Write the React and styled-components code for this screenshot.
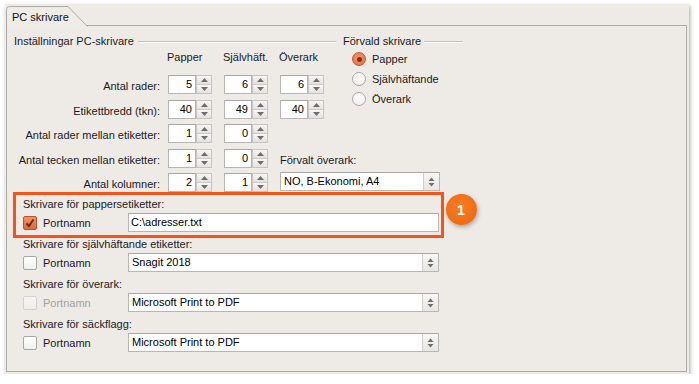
import React from 'react';
import styled, { createGlobalStyle } from 'styled-components';

const Global = createGlobalStyle`
  html, body { margin: 0; padding: 0; background: #ffffff; }
  body {
    font-family: "Liberation Sans", Arial, sans-serif;
    font-size: 11px;
    color: #1a1a1a;
  }
  * { box-sizing: border-box; }
`;

const Window = styled.div`
  margin: 4px 0 0 5px;
  width: 684px;
  height: 370px;
  background: #eeebe7;
  box-shadow: 1px 2px 4px rgba(0, 0, 0, 0.35);
  display: flex;
  flex-direction: column;
`;

const TabBar = styled.div`
  height: 21px;
  padding-left: 1px;
  display: flex;
  align-items: flex-end;
`;

const Tab = styled.div`
  position: relative;
  z-index: 1;
  width: 82px;
  height: 20px;
  margin-bottom: -1px;
  padding-left: 6px;
  display: flex;
  align-items: center;
  padding-top: 1px;
  color: #111;
`;

const TabShape = styled.svg`
  position: absolute;
  left: 0;
  top: 0;
  z-index: -1;
`;

const Panel = styled.div`
  flex: 1;
  margin: 0 2px 2px 1px;
  border: 1px solid #aeaba6;
  padding: 8px 0 0 7px;
  display: flex;
  flex-direction: column;
`;

const TopGrid = styled.div`
  display: grid;
  grid-template-columns: 154px 56px 56px 63px 120px;
  grid-template-rows: 16px 25px repeat(5, 24.5px);
`;

const GroupTitle = styled.div`
  grid-column: ${(p) => p.$col};
  grid-row: 1;
  height: 14px;
  display: flex;
  align-items: center;
  gap: ${(p) => p.$gap || 4}px;
  padding-right: ${(p) => p.$pr || 0}px;
  white-space: nowrap;
  color: #1a1a1a;
`;

const EtchLine = styled.span`
  flex: 1;
  height: 2px;
  border-top: 1px solid #c5c2bd;
  border-bottom: 1px solid #fbfaf9;
  margin-top: 1px;
`;

const ColHeader = styled.div`
  grid-column: ${(p) => p.$col};
  grid-row: 2;
  line-height: 14px;
  margin-left: -1px;
  align-self: start;
`;

const RowLabel = styled.div`
  grid-column: 1;
  grid-row: ${(p) => p.$row};
  text-align: right;
  padding-right: 8px;
  padding-top: 4px;
  line-height: 14px;
  white-space: nowrap;
`;

const SpinCell = styled.div`
  grid-column: ${(p) => p.$col};
  grid-row: ${(p) => p.$row};
  display: flex;
  width: 44px;
  height: 19px;
  align-self: start;
`;

const SpinInput = styled.div`
  width: 28px;
  height: 19px;
  background: #ffffff;
  border: 1px solid #b9b6b1;
  border-top-color: #aaa7a2;
  text-align: right;
  padding-right: 3px;
  line-height: 17px;
  color: #000;
`;

const SpinButtons = styled.div`
  width: 16px;
  height: 19px;
  border: 1px solid #c7c4bf;
  display: flex;
  flex-direction: column;
`;

const SpinHalf = styled.div`
  flex: 1;
  display: flex;
  align-items: center;
  justify-content: center;
  background: linear-gradient(#f7f6f5, #e4e2df);
  & + & { border-top: 1px solid #cfccc7; }
`;

const RadioList = styled.div`
  grid-column: 5;
  grid-row: 2 / 5;
  margin-top: -1px;
  display: flex;
  flex-direction: column;
`;

const RadioItem = styled.div`
  height: 20px;
  display: flex;
  align-items: center;
  gap: 6px;
  padding-left: 9px;
`;

const RadioCircle = styled.span`
  width: 14px;
  height: 14px;
  border-radius: 50%;
  display: flex;
  align-items: center;
  justify-content: center;
  border: 1px solid ${(p) => (p.$on ? '#c9582a' : '#a9a7a4')};
  background: ${(p) =>
    p.$on
      ? 'radial-gradient(circle at 50% 40%, #f59a6c, #e8683a)'
      : 'linear-gradient(#ffffff, #f1f0ee)'};
`;

const RadioDot = styled.span`
  width: 5px;
  height: 5px;
  border-radius: 50%;
  background: #7e3414;
`;

const OverarkLabel = styled.div`
  grid-column: 4 / 6;
  grid-row: 6;
  align-self: end;
  line-height: 14px;
  margin-bottom: 6px;
  white-space: nowrap;
`;

const SelectBox = styled.div`
  grid-column: ${(p) => p.$col || 'auto'};
  grid-row: ${(p) => p.$row || 'auto'};
  width: ${(p) => p.$w}px;
  height: 19px;
  margin-top: ${(p) => p.$mt || 0}px;
  align-self: start;
  display: flex;
  background: #ffffff;
  border: 1px solid #b9b6b1;
  border-top-color: #aaa7a2;
`;

const SelectText = styled.div`
  flex: 1;
  padding-left: 3px;
  line-height: 17px;
  color: #000;
  white-space: nowrap;
  overflow: hidden;
`;

const SelectButton = styled.div`
  width: 16px;
  display: flex;
  align-items: center;
  justify-content: center;
  border-left: 1px solid #d2cfca;
  background: linear-gradient(#f8f7f6, #e8e6e3);
`;

const TextField = styled.div`
  width: ${(p) => p.$w}px;
  height: 19px;
  background: #ffffff;
  border: 1px solid #b9b6b1;
  border-top-color: #aaa7a2;
  padding-left: 2px;
  line-height: 17px;
  color: #000;
`;

const Lower = styled.div`
  margin: -2px 0 0 9px;
  display: flex;
  flex-direction: column;
  gap: 3.5px;
`;

const Section = styled.div`
  position: relative;
  display: flex;
  flex-direction: column;
`;

const SectionLabel = styled.div`
  height: 16px;
  line-height: 16px;
  white-space: nowrap;
`;

const PortRow = styled.div`
  margin-top: 1.5px;
  height: 19px;
  display: flex;
  align-items: center;
`;

const CheckBox = styled.span`
  width: 14px;
  height: 14px;
  border-radius: 2px;
  display: flex;
  align-items: center;
  justify-content: center;
  border: 1px solid
    ${(p) => (p.$on ? '#b9532a' : p.$disabled ? '#d3d1ce' : '#a9a7a4')};
  background: ${(p) =>
    p.$on
      ? 'linear-gradient(#ef9366, #de6a3c)'
      : p.$disabled
      ? 'linear-gradient(#f6f5f3, #efedea)'
      : 'linear-gradient(#ffffff, #f1f0ee)'};
`;

const PortLabel = styled.span`
  width: 85px;
  margin-left: 6px;
  color: ${(p) => (p.$disabled ? '#a3a19e' : '#1a1a1a')};
`;

const Highlight = styled.div`
  position: absolute;
  left: -10px;
  top: -3.5px;
  width: 431px;
  height: 46px;
  border: 3px solid #f4531a;
  pointer-events: none;
`;

const Badge = styled.div`
  position: absolute;
  left: 422.5px;
  top: -1.5px;
  width: 31px;
  height: 31px;
  border-radius: 50%;
  background: radial-gradient(circle at 45% 40%, #f77d22, #ec650c);
  box-shadow: 1px 2px 4px rgba(0, 0, 0, 0.3);
  color: #ffffff;
  font-weight: bold;
  font-size: 14px;
  display: flex;
  align-items: center;
  justify-content: center;
`;

const UpArrow = () => (
  <svg width="7" height="4" viewBox="0 0 7 4">
    <path d="M0 4 L3.5 0 L7 4 Z" fill="#6f6d6a" />
  </svg>
);

const DownArrow = () => (
  <svg width="7" height="4" viewBox="0 0 7 4">
    <path d="M0 0 L7 0 L3.5 4 Z" fill="#6f6d6a" />
  </svg>
);

const UpDown = () => (
  <svg width="7" height="10" viewBox="0 0 7 10">
    <path d="M0.5 4 L3.5 0.5 L6.5 4 Z" fill="#6f6d6a" />
    <path d="M0.5 6 L6.5 6 L3.5 9.5 Z" fill="#6f6d6a" />
  </svg>
);

const Check = () => (
  <svg width="12" height="12" viewBox="0 0 12 12">
    <path d="M2.5 6.5 L5 9 L9.5 2.5" fill="none" stroke="#6b2a10" strokeWidth="2" />
  </svg>
);

const Spinner = ({ col, row, value }) => (
  <SpinCell $col={col} $row={row}>
    <SpinInput>{value}</SpinInput>
    <SpinButtons>
      <SpinHalf><UpArrow /></SpinHalf>
      <SpinHalf><DownArrow /></SpinHalf>
    </SpinButtons>
  </SpinCell>
);

const Select = ({ col, row, w, mt, children }) => (
  <SelectBox $col={col} $row={row} $w={w} $mt={mt}>
    <SelectText>{children}</SelectText>
    <SelectButton><UpDown /></SelectButton>
  </SelectBox>
);

const rows = [
  { label: 'Antal rader:', values: ['5', '6', '6'] },
  { label: 'Etikettbredd (tkn):', values: ['40', '49', '40'] },
  { label: 'Antal rader mellan etiketter:', values: ['1', '0'] },
  { label: 'Antal tecken mellan etiketter:', values: ['1', '0'] },
  { label: 'Antal kolumner:', values: ['2', '1'] },
];

const printers = [
  { title: 'Skrivare för pappersetiketter:', checked: true, kind: 'text', value: 'C:\\adresser.txt', highlight: true },
  { title: 'Skrivare för självhäftande etiketter:', kind: 'select', value: 'Snagit 2018' },
  { title: 'Skrivare för överark:', disabled: true, kind: 'select', value: 'Microsoft Print to PDF' },
  { title: 'Skrivare för säckflagg:', kind: 'select', value: 'Microsoft Print to PDF' },
];

export default function App() {
  return (
    <>
      <Global />
      <Window>
        <TabBar>
          <Tab>
            <TabShape width="82" height="21" viewBox="0 0 82 21">
              <path
                d="M0.5 21 V3.5 Q0.5 0.5 3.5 0.5 H62 L81.5 20.5"
                fill="#efece8"
                stroke="#aeaba6"
                strokeWidth="1"
              />
            </TabShape>
            PC skrivare
          </Tab>
        </TabBar>
        <Panel>
          <TopGrid>
            <GroupTitle $col="1 / 5" $pr={7}>
              Inställningar PC-skrivare
              <EtchLine />
            </GroupTitle>
            <GroupTitle $col="5" $gap={3}>
              Förvald skrivare
              <EtchLine />
            </GroupTitle>
            <ColHeader $col={2}>Papper</ColHeader>
            <ColHeader $col={3}>Självhäft.</ColHeader>
            <ColHeader $col={4}>Överark</ColHeader>
            <RadioList>
              {['Papper', 'Självhäftande', 'Överark'].map((r, i) => (
                <RadioItem key={r}>
                  <RadioCircle $on={i === 0}>{i === 0 && <RadioDot />}</RadioCircle>
                  {r}
                </RadioItem>
              ))}
            </RadioList>
            {rows.map((r, i) => (
              <React.Fragment key={r.label}>
                <RowLabel $row={i + 3}>{r.label}</RowLabel>
                {r.values.map((v, j) => (
                  <Spinner key={j} col={j + 2} row={i + 3} value={v} />
                ))}
              </React.Fragment>
            ))}
            <OverarkLabel>Förvalt överark:</OverarkLabel>
            <Select col="4 / 6" row={7} w={160} mt={-1}>
              NO, B-Ekonomi, A4
            </Select>
          </TopGrid>
          <Lower>
            {printers.map((p) => (
              <Section key={p.title}>
                <SectionLabel>{p.title}</SectionLabel>
                <PortRow>
                  <CheckBox $on={p.checked} $disabled={p.disabled}>
                    {p.checked && <Check />}
                  </CheckBox>
                  <PortLabel $disabled={p.disabled}>Portnamn</PortLabel>
                  {p.kind === 'text' ? (
                    <TextField $w={311}>{p.value}</TextField>
                  ) : (
                    <Select w={311}>{p.value}</Select>
                  )}
                </PortRow>
                {p.highlight && (
                  <>
                    <Highlight />
                    <Badge>1</Badge>
                  </>
                )}
              </Section>
            ))}
          </Lower>
        </Panel>
      </Window>
    </>
  );
}
